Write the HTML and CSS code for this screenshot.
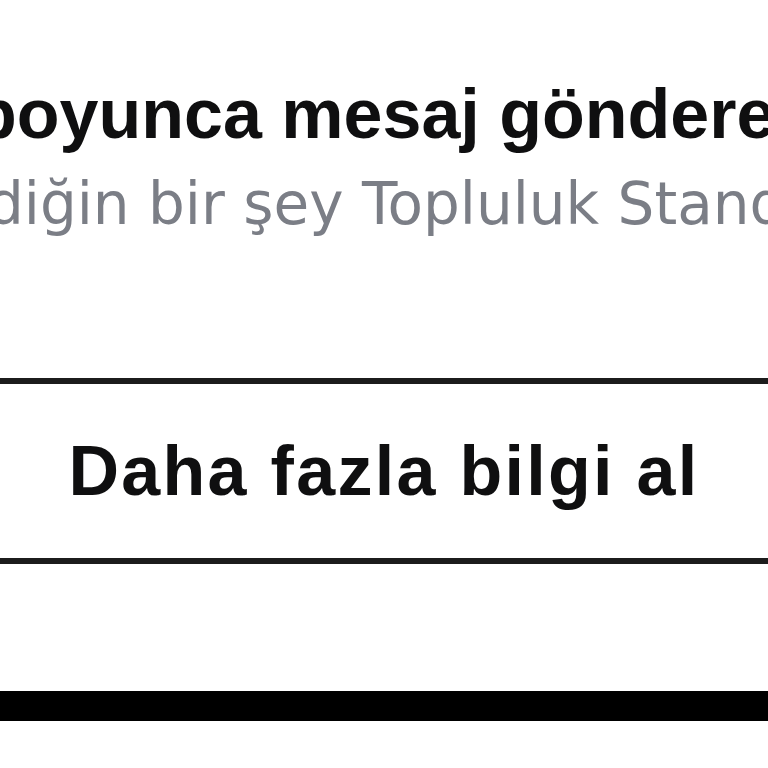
FILE: index.html
```html
<!DOCTYPE html>
<html lang="tr">
<head>
    <meta charset="UTF-8">
    <meta name="viewport" content="width=device-width, initial-scale=1.0">
    <title>Mesaj kısıtlaması</title>
    <link rel="stylesheet" href="styles.css">
</head>
<body>
    <!-- Restriction notice -->
    <div class="notice">
        <h1 class="notice-title">boyunca mesaj gönderemezsin</h1>
        <p class="notice-text">diğin bir şey Topluluk Standartlarımıza uymuyor</p>
    </div>

    <!-- Learn more button -->
    <div class="actions">
        <button class="more-btn">Daha fazla bilgi al</button>
    </div>

    <div class="bottom-bar"></div>
</body>
</html>
```

FILE: styles.css
```css
html, body {
    margin: 0;
    padding: 0;
    background-color: #fff;
    overflow: hidden;
    width: 768px;
    height: 768px;
}
body {
    font-family: "Liberation Sans", Arial, sans-serif;
    color: #111;
}
.notice {
    padding-top: 72px;
}
.notice-title {
    margin: 0 0 0 -26px;
    font-size: 70px;
    line-height: 84px;
    font-weight: bold;
    white-space: nowrap;
    color: #0f0f10;
}
.notice-text {
    margin: 8px 0 0 -13px;
    font-family: "DejaVu Sans", sans-serif;
    font-size: 58px;
    line-height: 80px;
    white-space: nowrap;
    color: #7b7e86;
}
.actions {
    margin: 0 -12px;
    padding-top: 134px;
}
.more-btn {
    display: block;
    width: 100%;
    height: 186px;
    background-color: #fff;
    border: 6px solid #1c1c1c;
    font-family: "Liberation Sans", Arial, sans-serif;
    font-size: 70px;
    font-weight: bold;
    letter-spacing: 2.3px;
    color: #0f0f10;
    padding: 0;
    cursor: pointer;
}
.bottom-bar {
    margin-top: 127px;
    height: 30px;
    background-color: #000;
}
```
